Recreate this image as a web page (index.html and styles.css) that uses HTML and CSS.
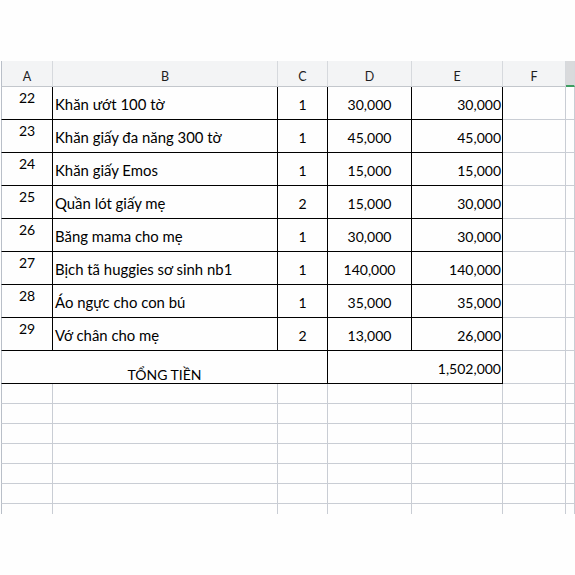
FILE: index.html
```html
<!DOCTYPE html>
<html lang="vi">
<head>
<meta charset="utf-8">
<title>Bảng tính</title>
<link rel="stylesheet" href="styles.css">
</head>
<body>
<div class="top-space"></div>
<table class="sheet">
  <colgroup>
    <col class="col-a"><col class="col-b"><col class="col-c"><col class="col-d"><col class="col-e"><col class="col-f"><col class="col-g">
  </colgroup>
  <thead>
    <tr class="hdr">
      <th class="first">A</th><th>B</th><th>C</th><th>D</th><th>E</th><th>F</th><th class="sel"></th>
    </tr>
  </thead>
  <tbody>
    <tr class="data"><td class="num first">22</td><td class="name">Khăn ướt 100 tờ</td><td class="ctr">1</td><td class="ctr">30,000</td><td class="rgt">30,000</td><td class="blank"></td><td class="blank"></td></tr>
    <tr class="data"><td class="num first">23</td><td class="name">Khăn giấy đa năng 300 tờ</td><td class="ctr">1</td><td class="ctr">45,000</td><td class="rgt">45,000</td><td class="blank"></td><td class="blank"></td></tr>
    <tr class="data"><td class="num first">24</td><td class="name">Khăn giấy Emos</td><td class="ctr">1</td><td class="ctr">15,000</td><td class="rgt">15,000</td><td class="blank"></td><td class="blank"></td></tr>
    <tr class="data"><td class="num first">25</td><td class="name">Quần lót giấy mẹ</td><td class="ctr">2</td><td class="ctr">15,000</td><td class="rgt">30,000</td><td class="blank"></td><td class="blank"></td></tr>
    <tr class="data"><td class="num first">26</td><td class="name">Băng mama cho mẹ</td><td class="ctr">1</td><td class="ctr">30,000</td><td class="rgt">30,000</td><td class="blank"></td><td class="blank"></td></tr>
    <tr class="data"><td class="num first">27</td><td class="name">Bịch tã huggies sơ sinh nb1</td><td class="ctr">1</td><td class="ctr">140,000</td><td class="rgt">140,000</td><td class="blank"></td><td class="blank"></td></tr>
    <tr class="data"><td class="num first">28</td><td class="name">Áo ngực cho con bú</td><td class="ctr">1</td><td class="ctr">35,000</td><td class="rgt">35,000</td><td class="blank"></td><td class="blank"></td></tr>
    <tr class="data"><td class="num first">29</td><td class="name">Vớ chân cho mẹ</td><td class="ctr">2</td><td class="ctr">13,000</td><td class="rgt">26,000</td><td class="blank"></td><td class="blank"></td></tr>
    <tr class="data total"><td class="label first" colspan="3">TỔNG TIỀN</td><td class="sum" colspan="2">1,502,000</td><td class="blank"></td><td class="blank"></td></tr>
    <tr class="empty"><td class="first"></td><td></td><td></td><td></td><td></td><td></td><td></td></tr>
    <tr class="empty"><td class="first"></td><td></td><td></td><td></td><td></td><td></td><td></td></tr>
    <tr class="empty"><td class="first"></td><td></td><td></td><td></td><td></td><td></td><td></td></tr>
    <tr class="empty"><td class="first"></td><td></td><td></td><td></td><td></td><td></td><td></td></tr>
    <tr class="empty"><td class="first"></td><td></td><td></td><td></td><td></td><td></td><td></td></tr>
    <tr class="empty"><td class="first"></td><td></td><td></td><td></td><td></td><td></td><td></td></tr>
    <tr class="tail"><td class="first"></td><td></td><td></td><td></td><td></td><td></td><td></td></tr>
  </tbody>
</table>
</body>
</html>
```
FILE: styles.css
```css
html, body {
  margin: 0;
  padding: 0;
  background: #fefefe;
  overflow: hidden;
}
body {
  font-family: Lato, "Open Sans", "Liberation Sans", sans-serif;
  color: #000;
}
.top-space {
  height: 61px;
}
.sheet {
  margin-left: 1px;
  width: 574px;
  table-layout: fixed;
  border-collapse: separate;
  border-spacing: 0;
}
.col-a { width: 52px; }
.col-b { width: 225px; }
.col-c { width: 50px; }
.col-d { width: 84px; }
.col-e { width: 91px; }
.col-f { width: 63px; }
.col-g { width: 9px; }

.sheet th, .sheet td {
  box-sizing: border-box;
  padding: 0;
  border-right: 1px solid #c9cdd4;
  border-bottom: 1px solid #c9cdd4;
  white-space: nowrap;
  overflow: hidden;
}
.sheet .first {
  border-left: 1px solid #b9bfc8;
}

/* header */
.hdr th {
  height: 26px;
  background: #f3f4f5;
  font-weight: normal;
  font-size: 12.5px;
  line-height: 15px;
  color: #1e1e1e;
  text-align: center;
  vertical-align: top;
  padding-top: 8px;
  border-right-color: #d6d9dd;
  border-bottom-color: #c3c7cc;
}
.hdr th.sel {
  background: #d9dadc;
  border-bottom: 2px solid #3f9d62;
}

/* data rows */
.data td {
  height: 33px;
  font-size: 14px;
  line-height: 17px;
  vertical-align: bottom;
  padding-bottom: 6px;
  border-right-color: #000;
  border-bottom-color: #000;
}
.data td.blank {
  border-right-color: #c9cdd4;
  border-bottom-color: #c9cdd4;
}
.data td.num {
  text-align: center;
  vertical-align: top;
  padding-top: 2px;
  padding-bottom: 0;
}
.data td.name {
  text-align: left;
  padding-left: 2px;
  font-size: 14.9px;
}
.data td.ctr {
  text-align: center;
}
.data td.rgt {
  text-align: right;
  padding-right: 1px;
}
.total td.label {
  text-align: center;
  padding-bottom: 0;
}
.total td.sum {
  text-align: right;
  padding-right: 1px;
  padding-bottom: 6px;
}

/* empty grid */
.empty td {
  height: 20px;
}
.tail td {
  height: 10px;
  border-bottom: none;
}
```
